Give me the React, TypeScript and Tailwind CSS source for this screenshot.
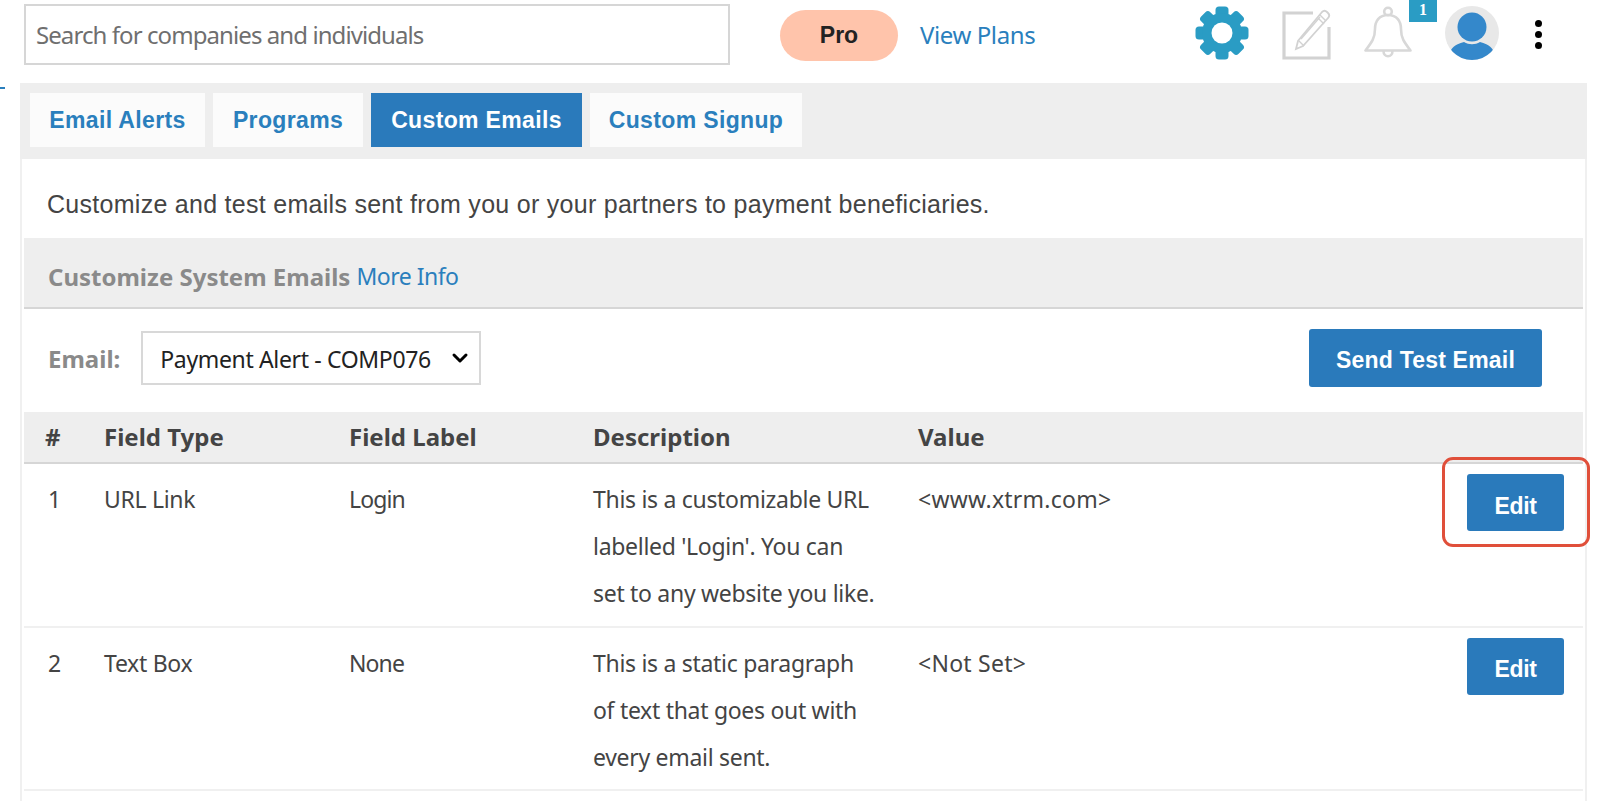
import { ChevronDown } from "lucide-react";

const tahoma = "font-['Noto_Sans',sans-serif]";
const arial = "font-['Liberation_Sans',Arial,sans-serif]";

const tabs = [
  { label: "Email Alerts", width: "w-[175px]" },
  { label: "Programs", width: "w-[150px]" },
  { label: "Custom Emails", width: "w-[211px]", active: true },
  { label: "Custom Signup", width: "w-[212px]" },
];

const rows = [
  {
    id: 1,
    type: "URL Link",
    label: "Login",
    desc: ["This is a customizable URL", "labelled 'Login'. You can", "set to any website you like."],
    value: "<www.xtrm.com>",
  },
  {
    id: 2,
    type: "Text Box",
    label: "None",
    desc: ["This is a static paragraph", "of text that goes out with", "every email sent."],
    value: "<Not Set>",
  },
];

function GearIcon() {
  return (
    <svg width="54" height="54" viewBox="0 0 54 54">
      <g fill="#2a9cc4">
        {[0, 45, 90, 135, 180, 225, 270, 315].map((a) => (
          <rect key={a} x="20.5" y="0.5" width="13" height="14" rx="3.5" transform={`rotate(${a} 27 27)`} />
        ))}
        <circle cx="27" cy="27" r="20" />
      </g>
      <circle cx="27" cy="27" r="10.5" fill="#fff" />
    </svg>
  );
}

function NoteIcon() {
  return (
    <svg width="50" height="52" viewBox="0 0 50 52" fill="none" stroke="#d2d2d2">
      <path d="M31 5H2v45h45V19" strokeWidth="3.2" />
      <path d="M14 41l2-8L40 4c1.500-1.500 3.500-1.500 5 0l1 1c1.500 1.500 1.500 3.500 0 5L21 38z" strokeWidth="1.8" fill="#fff" />
      <path d="M17 33l5 5M38 7l6 6M36 10l6 6M19 31L38 9" strokeWidth="1.4" />
    </svg>
  );
}

function BellIcon() {
  return (
    <svg width="48" height="54" viewBox="0 0 48 54" fill="none" stroke="#d8d8d8" strokeWidth="2.6">
      <circle cx="24" cy="5.500" r="3.800" />
      <path d="M24 9c-9 0-13 6.500-13 14 0 9-3 13-9.500 21.500h45C40 36 37 32 37 23c0-7.500-4-14-13-14z" strokeLinejoin="round" />
      <path d="M19.500 45c0 7 9 7 9 0" />
    </svg>
  );
}

function AvatarIcon() {
  return (
    <svg width="54" height="54" viewBox="0 0 54 54">
      <defs>
        <clipPath id="avatar-clip">
          <circle cx="27" cy="27" r="27" />
        </clipPath>
      </defs>
      <circle cx="27" cy="27" r="27" fill="#e8e8e8" />
      <g clipPath="url(#avatar-clip)" fill="#3488cb">
        <circle cx="27" cy="21" r="14.500" />
        <path d="M6 44c3-5 9-7 13-8 5 3 11 3 16 0 4 1 10 3 13 8v12H6z" />
      </g>
    </svg>
  );
}

function Header() {
  return (
    <header className="h-[83px] flex items-start pl-6 pr-[75px] pt-1">
      <div className="w-[706px] h-[61px] border-2 border-[#d6d6d6] bg-white flex items-center pl-[10px]">
        <span className={`${tahoma} text-[24px] text-[#6f6f6f] tracking-[-0.92px]`}>
          Search for companies and individuals
        </span>
      </div>
      <div className="ml-[50px] mt-[6px] w-[118px] h-[51px] rounded-full bg-[#ffc4ab] flex items-center justify-center">
        <span className={`${arial} text-[23px] font-bold text-[#222]`}>Pro</span>
      </div>
      <a className={`ml-[22px] mt-[14px] ${tahoma} text-[24px] leading-[34px] text-[#2a7fbd] tracking-[-0.4px]`}>
        View Plans
      </a>
      <div className="ml-auto mt-[2px] flex items-start">
        <GearIcon />
        <div className="ml-[33px] mt-[2px]">
          <NoteIcon />
        </div>
        <div className="relative ml-[32px]">
          <BellIcon />
          <span className="absolute left-[45px] -top-[6px] w-[28px] h-[22px] bg-[#2a9cc4] text-white text-[16px] leading-[20px] font-bold text-center font-['Liberation_Serif',serif]">
            1
          </span>
        </div>
        <div className="ml-[33px]">
          <AvatarIcon />
        </div>
        <div className="ml-[36px] mt-[14px] flex flex-col gap-[4px]">
          <span className="w-[7px] h-[7px] rounded-full bg-black" />
          <span className="w-[7px] h-[7px] rounded-full bg-black" />
          <span className="w-[7px] h-[7px] rounded-full bg-black" />
        </div>
      </div>
    </header>
  );
}

function Tabs() {
  return (
    <div className="h-[76px] bg-[#eeeeee] flex items-start gap-2 pl-[10px] pt-[10px]">
      {tabs.map((t) => (
        <div
          key={t.label}
          className={`${t.width} h-[54px] flex items-center justify-center ${arial} text-[23px] font-bold tracking-[0.35px] ${
            t.active ? "bg-[#2a7abb] text-white" : "bg-[#fbfbfb] text-[#2a7fbd]"
          }`}
        >
          {t.label}
        </div>
      ))}
    </div>
  );
}

function EditButton() {
  return (
    <button className={`w-[97px] h-[57px] pt-[7px] rounded-[3px] bg-[#2a7abb] text-white ${arial} text-[23px] font-bold`}>
      Edit
    </button>
  );
}

function FieldTable() {
  return (
    <table className={`w-[1559px] border-collapse table-fixed ${tahoma} text-[23px] text-[#444] tracking-[-0.3px]`}>
      <colgroup>
        <col className="w-[80px]" />
        <col className="w-[245px]" />
        <col className="w-[244px]" />
        <col className="w-[325px]" />
        <col />
        <col className="w-[130px]" />
      </colgroup>
      <thead>
        <tr className="h-[51px] bg-[#eeeeee] border-b-2 border-[#d6d6d6] text-left text-[24px] tracking-[0px]">
          <th className="pl-[21px] font-bold">#</th>
          <th className="font-bold">Field Type</th>
          <th className="font-bold">Field Label</th>
          <th className="font-bold">Description</th>
          <th className="font-bold">Value</th>
          <th />
        </tr>
      </thead>
      <tbody>
        {rows.map((r) => (
          <tr key={r.id} className="border-b-2 border-[#f0f0f0] align-top">
            <td className="pl-[24px] pt-[12px] leading-[47.200px]">{r.id}</td>
            <td className="pt-[12px] leading-[47.200px]">{r.type}</td>
            <td className="pt-[12px] leading-[47.200px] tracking-[-0.9px]">{r.label}</td>
            <td className="pt-[12px] pb-[8px] leading-[47.200px] whitespace-nowrap">
              {r.desc.map((line) => (
                <div key={line}>{line}</div>
              ))}
            </td>
            <td className="pt-[12px] leading-[47.200px] tracking-[0.25px]">{r.value}</td>
            <td className="pt-[10px] pl-[14px]">
              <EditButton />
            </td>
          </tr>
        ))}
      </tbody>
    </table>
  );
}

export default function App() {
  return (
    <div className="relative w-[1617px] h-[801px] overflow-hidden bg-white">
      <Header />
      {/* little blue tick left of the panel */}
      <div className="absolute left-0 top-[87px] w-[5px] h-[2px] bg-[#2a7fbd]" />

      <div className="ml-5 w-[1567px]">
        <Tabs />
        <div className="h-[642px] border-x-2 border-[#f0f0f0] pl-[2px]">
          <p className={`${arial} text-[25px] leading-[68px] pt-[11px] text-[#444] pl-[23px] tracking-[0.28px]`}>
            Customize and test emails sent from you or your partners to payment beneficiaries.
          </p>
          <div className="w-[1559px] h-[71px] bg-[#eeeeee] border-b-2 border-[#d6d6d6] flex items-center pl-6 pt-2 gap-[6px]">
            <span className={`${tahoma} text-[24px] font-bold text-[#8a8a8a] tracking-[0px]`}>
              Customize System Emails
            </span>
            <a className={`${tahoma} text-[23px] text-[#2a7fbd] tracking-[-0.5px]`}>More Info</a>
          </div>
          <div className="w-[1559px] h-[103px] flex items-center pl-6 pr-[41px] pb-[6px]">
            <span className={`${tahoma} mt-[2px] text-[24px] font-bold text-[#8a8a8a] tracking-[0px]`}>Email:</span>
            <div className="relative ml-[21px]">
              <select
                className={`w-[340px] h-[54px] appearance-none border-2 border-[#d8d8d8] bg-white pl-[17px] pt-[4px] ${tahoma} text-[23px] text-[#222] tracking-[-0.35px]`}
                defaultValue="Payment Alert - COMP076"
              >
                <option>Payment Alert - COMP076</option>
              </select>
              <ChevronDown
                className="absolute right-[9px] top-[15px] w-6 h-6 text-black pointer-events-none"
                strokeWidth={3}
              />
            </div>
            <button
              className={`ml-auto w-[233px] h-[58px] pt-[6px] rounded-[3px] bg-[#2a7abb] text-white ${arial} text-[23px] font-bold tracking-[0.2px]`}
            >
              Send Test Email
            </button>
          </div>
          <FieldTable />
        </div>
      </div>

      {/* red annotation around the first Edit button */}
      <div className="absolute left-[1442px] top-[457px] w-[148px] h-[90px] rounded-[11px] border-[3px] border-[#e04f3a]" />
    </div>
  );
}
